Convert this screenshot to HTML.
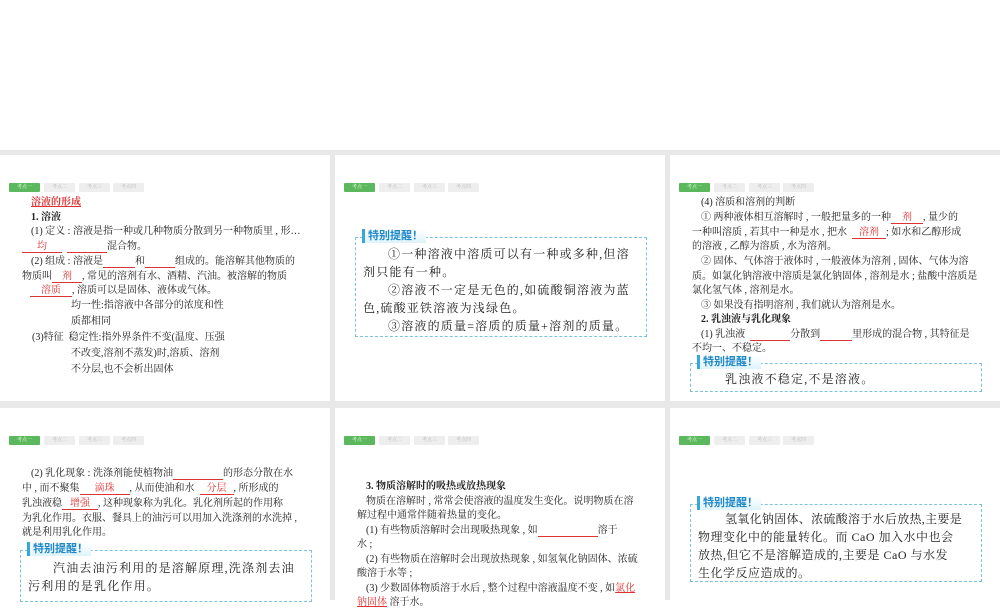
<!DOCTYPE html>
<html><head><meta charset="utf-8"><style>
body{margin:0;width:1000px;height:600px;background:#fff;position:relative;overflow:hidden;font-family:"Liberation Serif","Noto Serif CJK SC","Noto Sans CJK SC",serif;color:#222}
.bg{position:absolute;left:0;top:150px;width:1000px;height:450px;background:#e8e8e8}
.s{position:absolute;background:#fff;width:330px}
.tabs{position:absolute;left:9px;height:9px}
.tabs span{position:absolute;top:0;width:31px;height:9px;background:#eee;color:#bbb;font-size:5px;line-height:9px;text-align:center;border-radius:1px}
.tabs span:first-child{background:#5cb85c;color:#e8ffe8}
.l{position:absolute;font-size:10px;white-space:nowrap;line-height:12px}
.r{color:#d33;text-decoration:underline}
.u{display:inline-block;border-bottom:1px solid #d33;color:#d33;text-align:center;line-height:11px;height:11px;vertical-align:bottom}
.b{font-weight:bold}
.box{position:absolute;border:1px dashed #7cc4dd}
.lab{position:absolute;top:-9px;left:6px;padding:0 3px;border-left:3px solid #38a8d8;color:#1e88c8;font-family:"Liberation Sans","Noto Sans CJK SC",sans-serif;font-weight:bold;font-size:11px;line-height:14px;background:linear-gradient(#fff,#dff3fb)}
.k{position:absolute;font-size:12px;white-space:nowrap;letter-spacing:1.2px;line-height:16px}
</style></head><body>
<div class="bg"></div>

<div class="s" style="left:0;top:155px;height:246px">
<div class="tabs" style="top:28px"><span style="left:0">考点一</span><span style="left:35px">考点二</span><span style="left:70px">考点三</span><span style="left:104px">考点四</span></div>
<div class="l b r" style="left:31px;top:42px">溶液的形成</div>
<div class="l b" style="left:31px;top:57px">1. 溶液</div>
<div class="l" style="left:31px;top:71px">(1) 定义 : 溶液是指一种或几种物质分散到另一种物质里 , 形…</div>
<div class="l" style="left:22px;top:86px"><span class="u" style="width:40px">均</span>&nbsp;&nbsp;<span class="u" style="width:40px"></span>混合物。</div>
<div class="l" style="left:31px;top:101px">(2) 组成 : 溶液是<span class="u" style="width:32px"></span>和<span class="u" style="width:30px"></span>组成的。能溶解其他物质的</div>
<div class="l" style="left:22px;top:116px">物质叫<span class="u" style="width:30px">剂</span>, 常见的溶剂有水、酒精、汽油。被溶解的物质</div>
<div class="l" style="left:30px;top:130px"><span class="u" style="width:42px">溶质</span>, 溶质可以是固体、液体或气体。</div>
<div class="l" style="left:71px;top:145px">均一性:指溶液中各部分的浓度和性</div>
<div class="l" style="left:71px;top:161px">质都相同</div>
<div class="l" style="left:32px;top:177px">(3)特征&nbsp;&nbsp;稳定性:指外界条件不变(温度、压强</div>
<div class="l" style="left:71px;top:193px">不改变,溶剂不蒸发)时,溶质、溶剂</div>
<div class="l" style="left:71px;top:209px">不分层,也不会析出固体</div>
</div>

<div class="s" style="left:335px;top:155px;height:246px">
<div class="tabs" style="top:28px"><span style="left:0">考点一</span><span style="left:35px">考点二</span><span style="left:70px">考点三</span><span style="left:104px">考点四</span></div>
<div class="box" style="left:20px;top:82px;width:290px;height:98px"><div class="lab">特别提醒！</div></div>
<div class="k" style="left:53px;top:91px">①一种溶液中溶质可以有一种或多种,但溶</div>
<div class="k" style="left:28px;top:109px">剂只能有一种。</div>
<div class="k" style="left:53px;top:127px">②溶液不一定是无色的,如硫酸铜溶液为蓝</div>
<div class="k" style="left:28px;top:145px">色,硫酸亚铁溶液为浅绿色。</div>
<div class="k" style="left:53px;top:163px">③溶液的质量=溶质的质量+溶剂的质量。</div>
</div>

<div class="s" style="left:670px;top:155px;height:246px">
<div class="tabs" style="top:28px"><span style="left:0">考点一</span><span style="left:35px">考点二</span><span style="left:70px">考点三</span><span style="left:104px">考点四</span></div>
<div class="l" style="left:31px;top:42px">(4) 溶质和溶剂的判断</div>
<div class="l" style="left:31px;top:57px">① 两种液体相互溶解时 , 一般把量多的一种<span class="u" style="width:32px">剂</span>, 量少的</div>
<div class="l" style="left:22px;top:72px">一种叫溶质 , 若其中一种是水 , 把水&nbsp;&nbsp;<span class="u" style="width:34px">溶剂</span>; 如水和乙醇形成</div>
<div class="l" style="left:22px;top:86px">的溶液 , 乙醇为溶质 , 水为溶剂。</div>
<div class="l" style="left:31px;top:101px">② 固体、气体溶于液体时 , 一般液体为溶剂 , 固体、气体为溶</div>
<div class="l" style="left:22px;top:116px">质。如氯化钠溶液中溶质是氯化钠固体 , 溶剂是水 ; 盐酸中溶质是</div>
<div class="l" style="left:22px;top:130px">氯化氢气体 , 溶剂是水。</div>
<div class="l" style="left:31px;top:145px">③ 如果没有指明溶剂 , 我们就认为溶剂是水。</div>
<div class="l b" style="left:31px;top:159px">2. 乳浊液与乳化现象</div>
<div class="l" style="left:31px;top:174px">(1) 乳浊液&nbsp;&nbsp;<span class="u" style="width:40px"></span>分散到<span class="u" style="width:32px"></span>里形成的混合物 , 其特征是</div>
<div class="l" style="left:22px;top:188px">不均一、不稳定。</div>
<div class="box" style="left:20px;top:208px;width:290px;height:27px"><div class="lab">特别提醒！</div></div>
<div class="k" style="left:55px;top:216px">乳浊液不稳定,不是溶液。</div>
</div>

<div class="s" style="left:0;top:408px;height:192px">
<div class="tabs" style="top:28px"><span style="left:0">考点一</span><span style="left:35px">考点二</span><span style="left:70px">考点三</span><span style="left:104px">考点四</span></div>
<div class="l" style="left:31px;top:60px">(2) 乳化现象 : 洗涤剂能使植物油<span class="u" style="width:50px"></span>的形态分散在水</div>
<div class="l" style="left:22px;top:75px">中 , 而不聚集<span class="u" style="width:50px">滴珠</span>, 从而使油和水&nbsp;&nbsp;<span class="u" style="width:34px">分层</span>, 所形成的</div>
<div class="l" style="left:22px;top:90px">乳浊液稳<span class="u" style="width:36px">增强</span>, 这种现象称为乳化。乳化剂所起的作用称</div>
<div class="l" style="left:22px;top:105px">为乳化作用。衣服、餐具上的油污可以用加入洗涤剂的水洗掉 ,</div>
<div class="l" style="left:22px;top:119px">就是利用乳化作用。</div>
<div class="box" style="left:20px;top:142px;width:290px;height:50px"><div class="lab">特别提醒！</div></div>
<div class="k" style="left:53px;top:152px">汽油去油污利用的是溶解原理,洗涤剂去油</div>
<div class="k" style="left:28px;top:170px">污利用的是乳化作用。</div>
</div>

<div class="s" style="left:335px;top:408px;height:192px">
<div class="tabs" style="top:28px"><span style="left:0">考点一</span><span style="left:35px">考点二</span><span style="left:70px">考点三</span><span style="left:104px">考点四</span></div>
<div class="l b" style="left:31px;top:73px">3. 物质溶解时的吸热或放热现象</div>
<div class="l" style="left:31px;top:88px">物质在溶解时 , 常常会使溶液的温度发生变化。说明物质在溶</div>
<div class="l" style="left:22px;top:102px">解过程中通常伴随着热量的变化。</div>
<div class="l" style="left:31px;top:117px">(1) 有些物质溶解时会出现吸热现象 , 如<span class="u" style="width:60px"></span>溶于</div>
<div class="l" style="left:22px;top:131px">水 ;</div>
<div class="l" style="left:31px;top:146px">(2) 有些物质在溶解时会出现放热现象 , 如氢氧化钠固体、浓硫</div>
<div class="l" style="left:22px;top:160px">酸溶于水等 ;</div>
<div class="l" style="left:31px;top:175px">(3) 少数固体物质溶于水后 , 整个过程中溶液温度不变 , 如<span class="r">氯化</span></div>
<div class="l" style="left:22px;top:189px"><span class="r">钠固体</span> 溶于水。</div>
</div>

<div class="s" style="left:670px;top:408px;height:192px">
<div class="tabs" style="top:28px"><span style="left:0">考点一</span><span style="left:35px">考点二</span><span style="left:70px">考点三</span><span style="left:104px">考点四</span></div>
<div class="box" style="left:20px;top:96px;width:290px;height:76px"><div class="lab">特别提醒！</div></div>
<div class="k" style="left:55px;top:103px;letter-spacing:0.3px">氢氧化钠固体、浓硫酸溶于水后放热,主要是</div>
<div class="k" style="left:28px;top:121px;letter-spacing:0.5px">物理变化中的能量转化。而 CaO 加入水中也会</div>
<div class="k" style="left:28px;top:139px;letter-spacing:0.5px">放热,但它不是溶解造成的,主要是 CaO 与水发</div>
<div class="k" style="left:28px;top:157px;letter-spacing:0.5px">生化学反应造成的。</div>
</div>
</body></html>
